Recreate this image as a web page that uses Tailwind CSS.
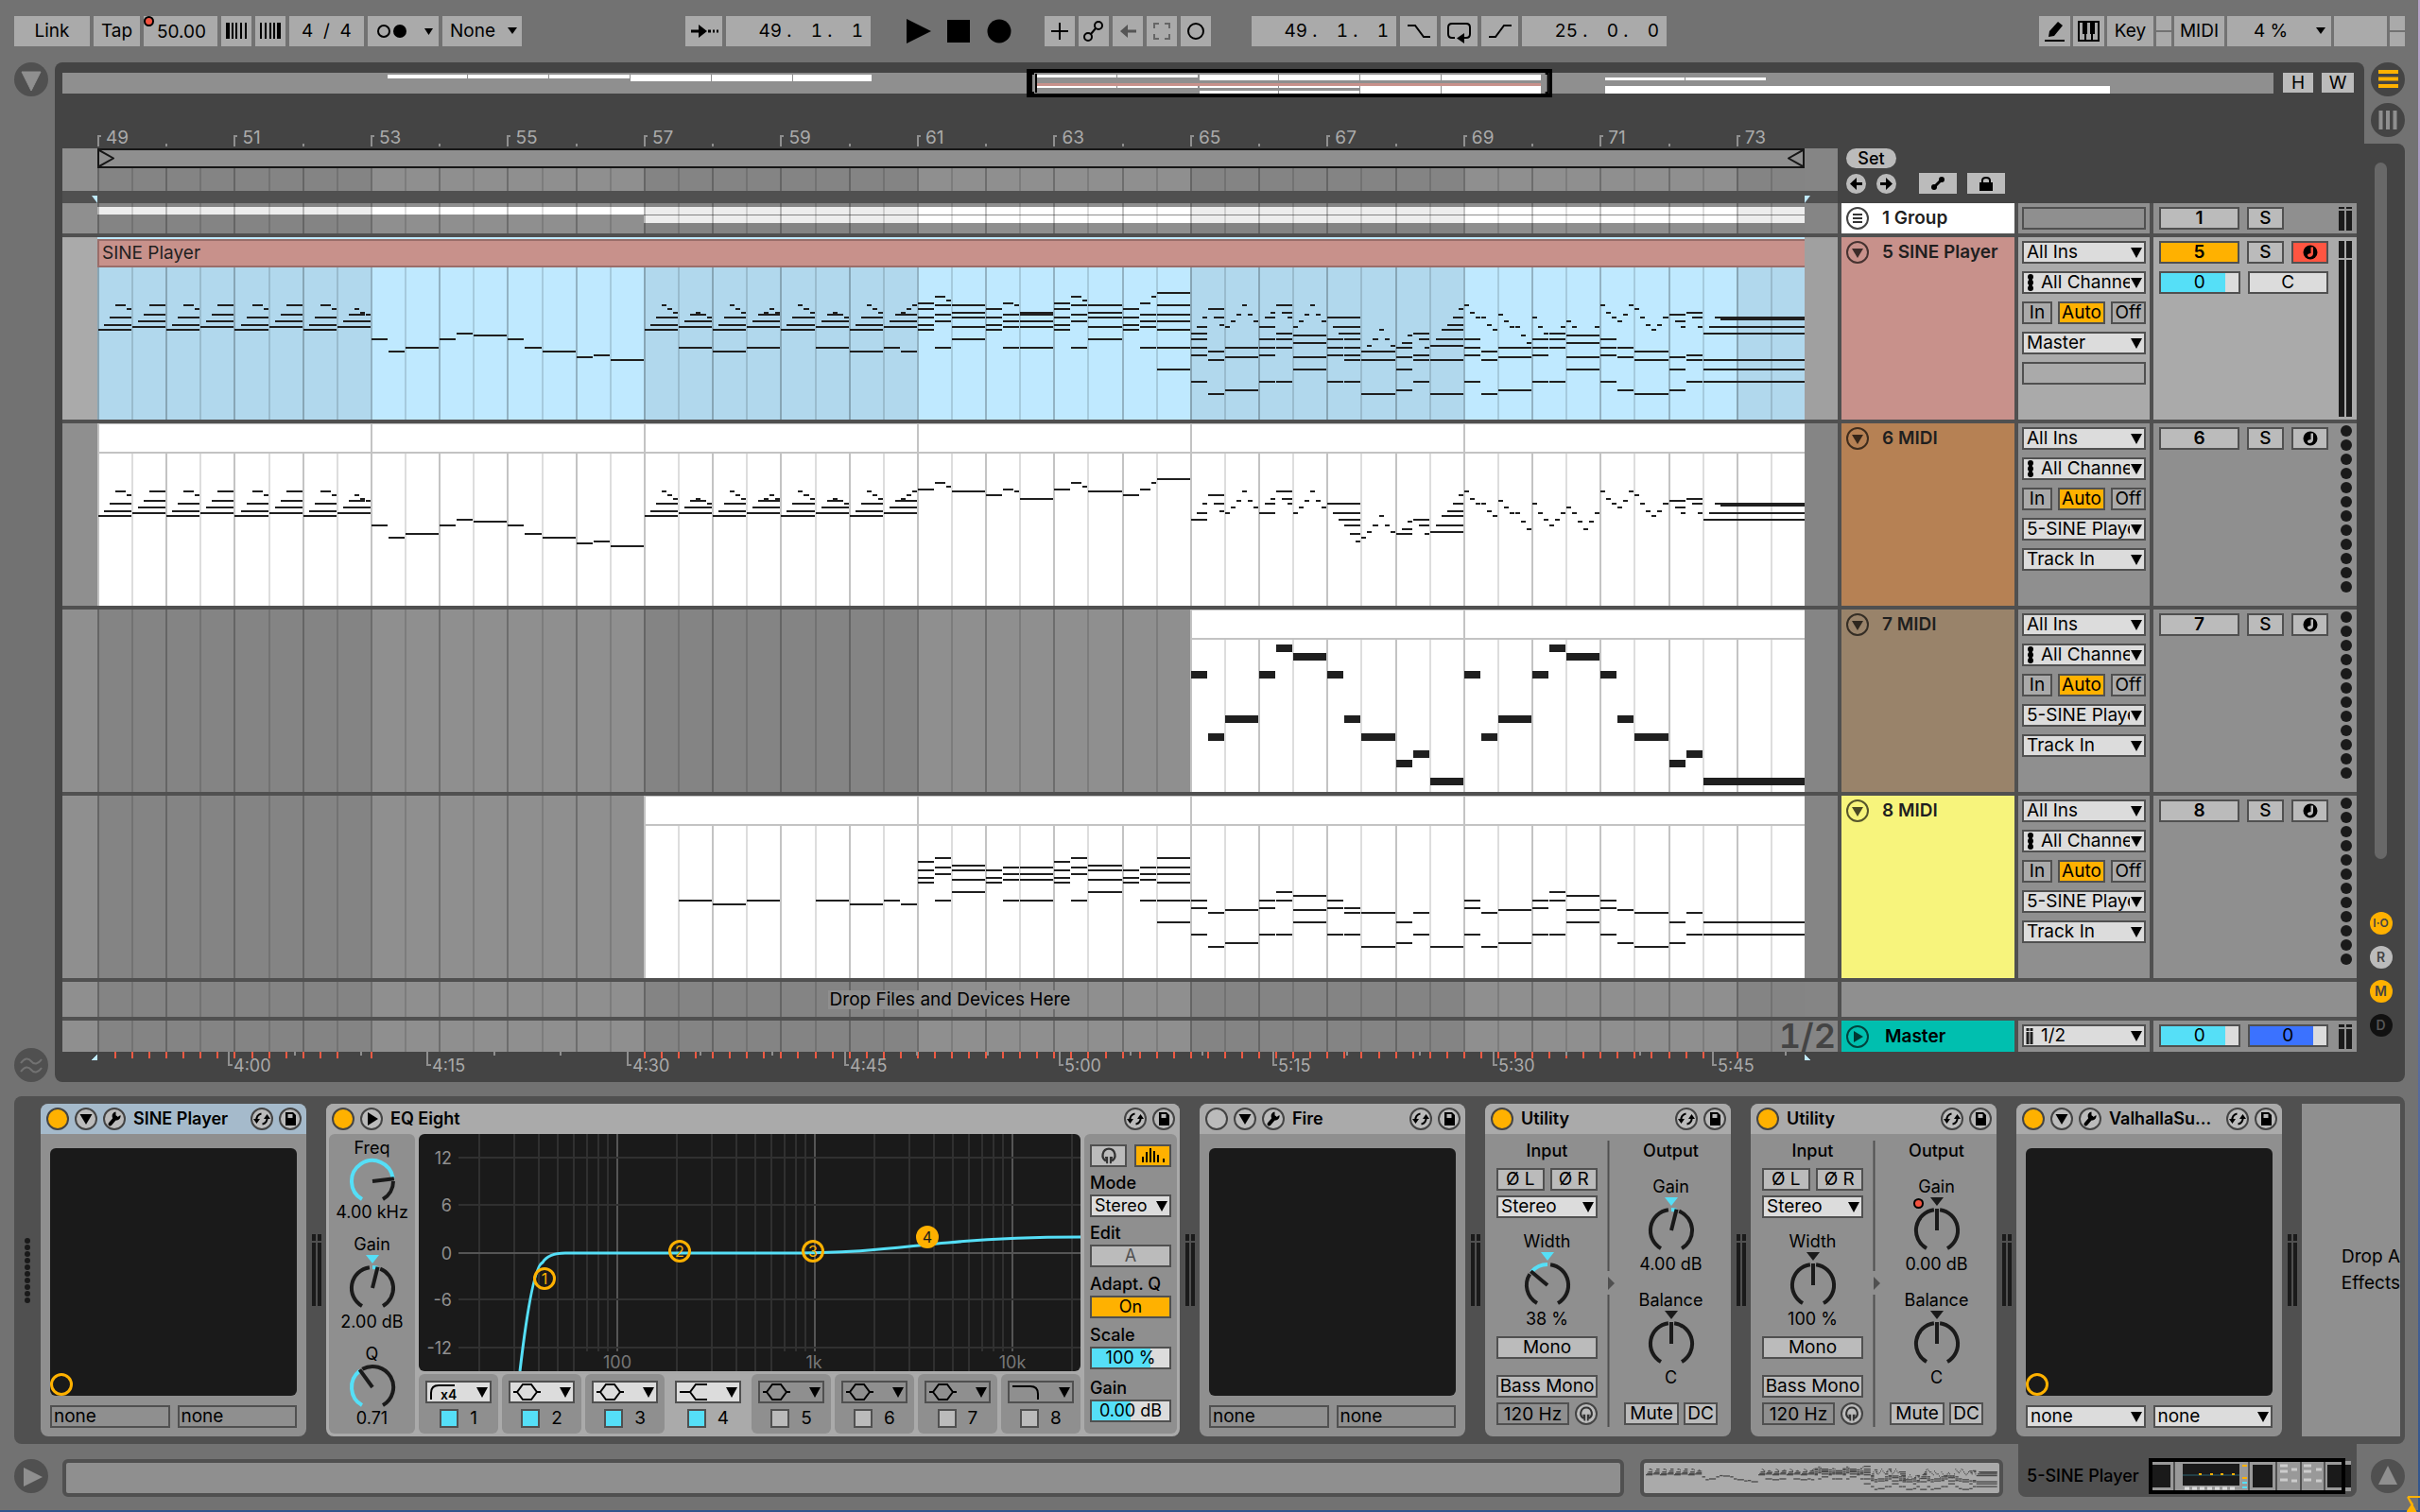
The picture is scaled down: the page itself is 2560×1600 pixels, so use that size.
<!DOCTYPE html>
<html lang="en">

<head>
  <meta charset="utf-8">
  <title>Arrangement</title>
  <script src="https://cdn.jsdelivr.net/npm/@tailwindcss/browser@4"></script>
</head>

<body class="relative min-h-screen overflow-x-hidden bg-linear-to-b from-[#b9a3c9] to-[#2f548c] pr-[2px] pb-[2px] font-[Inter,'Liberation_Sans',sans-serif] text-[19px] leading-[20px] text-black">
  <div class="bg-[#727272]">

    <!-- toolbar -->
    <header class="flex h-[66px] items-center pr-[14px] pl-[15px]">
      <div class="flex h-8 gap-1">
        <button class="w-[80px] bg-[#aaa]">Link</button>
        <button class="w-[49px] bg-[#aaa]">Tap</button>
        <label class="relative w-[78px] bg-[#aaa]">
          <input aria-label="Tempo" value="50.00" class="h-full w-full pl-[14px]">
          <span class="absolute top-0 left-0 size-[11px] rounded-full border-2 border-black bg-[#f4523f]"></span>
        </label>
        <button aria-label="Nudge down" class="w-8 bg-[#aaa]"><svg viewBox="0 0 32 32"><path d="M12 7v17M16 7v17M21 7v17M26 7v17" stroke="#000" stroke-width="2"/><path d="M7 7v17" stroke="#000" stroke-width="4"/></svg></button>
        <button aria-label="Nudge up" class="w-8 bg-[#aaa]"><svg viewBox="0 0 32 32"><path d="M6 7v17M11 7v17M16 7v17M20 7v17" stroke="#000" stroke-width="2"/><path d="M25 7v17" stroke="#000" stroke-width="4"/></svg></button>
        <input aria-label="Time signature" value="4  /  4" class="w-[79px] bg-[#aaa] text-center whitespace-pre">
        <button aria-label="Metronome" class="w-[75px] bg-[#aaa]"><svg viewBox="0 0 75 32"><circle cx="17" cy="16" r="6" fill="none" stroke="#000" stroke-width="2"/><circle cx="34" cy="16" r="7"/><path d="M60 13h9l-4.500 7z"/></svg></button>
        <button class="flex w-[84px] items-center justify-between bg-[#aaa] pr-[5px] pl-2">None<svg class="w-[10px]" viewBox="0 0 10 8"><path d="M0 0h10L5 7z"/></svg></button>
      </div>
      <div class="flex-[173]"></div>
      <div class="flex h-8 gap-1">
        <button aria-label="Follow" class="w-[39px] bg-[#aaa]"><svg viewBox="0 0 39 32"><path d="M6 16h10M24 16h3M29 16h2M33 16h2" stroke="#000" stroke-width="3"/><path d="M14 9l9 7-9 7z"/></svg></button>
        <input aria-label="Arrangement position" value="49 .    1 .    1" class="mr-[33px] w-[153px] bg-[#aaa] pr-2 text-right tabular-nums">
        <button aria-label="Play" class="w-[28px]"><svg viewBox="0 0 28 32"><path d="M1 3l26 13L1 29z"/></svg></button>
        <button aria-label="Stop" class="ml-2 w-[32px]"><svg viewBox="0 0 32 32"><path d="M4 4h24v24H4z"/></svg></button>
        <button aria-label="Record" class="ml-[7px] mr-[28px] w-[32px]"><svg viewBox="0 0 32 32"><circle cx="16" cy="16" r="12.500"/></svg></button>
        <button aria-label="Overdub" class="w-8 bg-[#aaa]"><svg viewBox="0 0 32 32"><path d="M16 7v18M7 16h18" stroke="#000" stroke-width="2"/></svg></button>
        <button aria-label="Automation arm" class="w-8 bg-[#aaa]"><svg viewBox="0 0 32 32" fill="none" stroke="#000" stroke-width="2"><circle cx="21" cy="10" r="4"/><circle cx="10" cy="22" r="4"/><path d="M18 13l-5 6"/></svg></button>
        <button aria-label="Re-enable automation" class="w-8 bg-[#aaa]"><svg viewBox="0 0 32 32"><path d="M12 16h13" stroke="#555" stroke-width="3"/><path d="M16 9v14l-8-7z" fill="#555"/></svg></button>
        <button aria-label="Capture MIDI" class="w-8 bg-[#aaa]"><svg viewBox="0 0 32 32" fill="none" stroke="#666" stroke-width="2"><path d="M8 13V8h5M19 8h5v5M24 19v5h-5M13 24H8v-5"/></svg></button>
        <button aria-label="Session record" class="w-8 bg-[#aaa]"><svg viewBox="0 0 32 32"><circle cx="16" cy="16" r="8" fill="none" stroke="#000" stroke-width="2"/></svg></button>
      </div>
      <div class="flex-[43]"></div>
      <div class="flex h-8 gap-1">
        <input aria-label="Loop start" value="49 .    1 .    1" class="w-[153px] bg-[#aaa] pr-2 text-right tabular-nums">
        <button aria-label="Punch in" class="w-[39px] bg-[#aaa]"><svg viewBox="0 0 39 32"><path d="M8 10h8l9 12h7" fill="none" stroke="#000" stroke-width="2"/></svg></button>
        <button aria-label="Loop" class="w-[39px] bg-[#aaa]"><svg viewBox="0 0 39 32"><path d="M15 23h-3q-4 0-4-4v-7q0-4 4-4h15q4 0 4 4v7q0 4-4 4h-4" fill="none" stroke="#000" stroke-width="2"/><path d="M25 18v11l-8-5.500z"/></svg></button>
        <button aria-label="Punch out" class="w-[39px] bg-[#aaa]"><svg viewBox="0 0 39 32"><path d="M8 22h7l9-12h8" fill="none" stroke="#000" stroke-width="2"/></svg></button>
        <input aria-label="Loop length" value="25 .    0 .    0" class="w-[153px] bg-[#aaa] pr-2 text-right tabular-nums">
      </div>
      <div class="flex-[394]"></div>
      <div class="flex h-8 gap-[3px]">
        <button aria-label="Draw mode" class="w-[33px] bg-[#aaa]"><svg viewBox="0 0 33 32"><path d="M6 26h21" stroke="#000" stroke-width="2"/><path d="M10 22l1-6 9-10 5 4-9 11z"/></svg></button>
        <button aria-label="Computer MIDI keyboard" class="w-[33px] bg-[#aaa]"><svg viewBox="0 0 33 32"><path d="M6 6h21v20H6zM13 18v8M20 18v8" fill="none" stroke="#000" stroke-width="2"/><path d="M10 6h5v13h-5zM18 6h5v13h-5z"/></svg></button>
        <button class="w-[49px] bg-[#aaa]">Key</button>
        <div class="flex w-4 flex-col gap-[2px]"><i class="flex-1 bg-[#aaa]"></i><i class="flex-1 bg-[#aaa]"></i></div>
        <button class="w-[53px] bg-[#aaa]">MIDI</button>
        <button class="flex w-[110px] items-center justify-between bg-[#aaa] pr-[6px] pl-[28px]">4 %<svg class="w-[10px]" viewBox="0 0 10 8"><path d="M0 0h10L5 7z"/></svg></button>
        <div class="w-[56px] bg-[#aaa]"></div>
        <div class="flex w-4 flex-col gap-[2px]"><i class="flex-1 bg-[#aaa]"></i><i class="flex-1 bg-[#aaa]"></i></div>
      </div>
    </header>

    <!-- arrangement -->
    <main class="flex">
      <div class="flex w-[58px] shrink-0 flex-col justify-between pl-[15px]">
        <button aria-label="Show browser" class="size-9"><svg viewBox="0 0 36 36"><circle cx="18" cy="18" r="18" fill="#505050"/><path d="M8 10h20L18 30z" fill="#8f8f8f" stroke="#8f8f8f" stroke-linejoin="round"/></svg></button>
        <button aria-label="Groove pool" class="size-9"><svg viewBox="0 0 36 36"><circle cx="18" cy="18" r="18" fill="#505050"/><path d="M7 16q6-8 11-2t11-2M7 25q6-8 11-2t11-2" fill="none" stroke="#727272" stroke-width="2"/></svg></button>
      </div>

      <div class="min-w-0 flex-1 rounded-l-lg rounded-tr-lg bg-[#444] pt-[11px] pr-2 pl-2">
        <div class="flex items-start">
          <div class="relative h-[22px] flex-1 bg-[#8f8f8f]">
            <svg id="overview" class="h-full w-full" viewBox="0 0 2339 22" preserveAspectRatio="none" shape-rendering="crispEdges"></svg>
            <svg class="absolute -top-[4px] left-[43.600%] h-[30px] w-[23.800%]" viewBox="0 0 556 30" preserveAspectRatio="none"><path d="M2 2h552v26H2z" fill="none" stroke="#000" stroke-width="4"/><path d="M8 5H5v20h3M548 5h3v20h-3M10 5v20" fill="none" stroke="#000" stroke-width="2"/></svg>
          </div>
          <button class="ml-[10px] h-[21px] w-8 bg-[#bbb]">H</button>
          <button class="mr-[3px] ml-[9px] h-[21px] w-[34px] bg-[#bbb]">W</button>
        </div>

        <!-- beat ruler -->
        <div class="flex h-[58px] items-end">
          <div id="beats" class="ml-[37px] flex flex-1 text-[#aaa]"></div>
          <div class="w-[584px]"></div>
        </div>

        <div class="flex gap-1">
          <div class="flex-1">
            <div class="flex h-[45px]">
              <div class="w-[37px] bg-[#8f8f8f]"></div>
              <div class="flex-1 bg-[#8f8f8f]">
                <div class="flex h-[21px] justify-between border-2 border-[#161616]">
                  <svg class="w-4" viewBox="0 0 16 17"><path d="M0 0l15 8.500L0 17" fill="none" stroke="#161616" stroke-width="2"/></svg>
                  <svg class="w-4" viewBox="0 0 16 17"><path d="M16 0L1 8.500 16 17" fill="none" stroke="#161616" stroke-width="2"/></svg>
                </div>
                <svg data-lane="scrub" class="h-[24px] w-full" viewBox="0 0 1806 24" preserveAspectRatio="none" shape-rendering="crispEdges"></svg>
              </div>
              <div class="w-[35px] bg-[#858585]"></div>
            </div>
            <div class="flex h-[13px] items-end justify-between bg-[#505050] pr-[29px] pl-[31px]">
              <svg class="w-[6px]" viewBox="0 0 6 8"><path d="M0 0h6v8z" fill="#bfe9ff"/></svg>
              <svg class="w-[6px]" viewBox="0 0 6 8"><path d="M0 0h6L0 8z" fill="#bfe9ff"/></svg>
            </div>
          </div>
          <div class="w-[545px] pl-[5px]">
            <button class="block h-[21px] w-[53px] rounded-full bg-[#bbb] text-[18px] font-medium">Set</button>
            <div class="mt-[5px] flex items-center">
              <button aria-label="Previous locator" class="size-[21px]"><svg viewBox="0 0 21 21"><circle cx="10.500" cy="10.500" r="10.500" fill="#bbb"/><path d="M8 10.500h9" stroke="#000" stroke-width="3"/><path d="M11 4v13l-7-6.500z"/></svg></button>
              <button aria-label="Next locator" class="ml-[11px] size-[21px]"><svg viewBox="0 0 21 21"><circle cx="10.500" cy="10.500" r="10.500" fill="#bbb"/><path d="M4 10.500h9" stroke="#000" stroke-width="3"/><path d="M10 4v13l7-6.500z"/></svg></button>
              <button aria-label="Automation mode" class="ml-6 h-[22px] w-10 bg-[#bbb]"><svg viewBox="0 0 40 22"><path d="M16 15l8-8" stroke="#000" stroke-width="3"/><circle cx="24" cy="7" r="3"/><circle cx="16" cy="15" r="3"/></svg></button>
              <button aria-label="Lock envelopes" class="ml-[11px] h-[22px] w-10 bg-[#bbb]"><svg viewBox="0 0 40 22"><path d="M13 10h14v9H13z"/><path d="M16 11V8q0-3 4-3t4 3v3" fill="none" stroke="#000" stroke-width="2"/></svg></button>
            </div>
          </div>
        </div>

        <div id="tracks" class="flex flex-col gap-1 bg-[#505050]"></div>

        <!-- time ruler -->
        <div class="flex h-8">
          <div id="times" class="relative ml-[37px] flex-1 text-[#aaa]"></div>
          <div class="w-[584px]"></div>
        </div>
      </div>

      <div class="flex w-[57px] shrink-0 flex-col">
        <div class="flex h-[86px] flex-col items-center gap-[7px] pr-[7px]">
          <button aria-label="Arrangement view" class="size-9"><svg viewBox="0 0 36 36"><circle cx="18" cy="18" r="18" fill="#444"/><path d="M8 10h21M8 17.500h21M8 25h21" stroke="#ffb100" stroke-width="4"/></svg></button>
          <button aria-label="Session view" class="size-9"><svg viewBox="0 0 36 36"><circle cx="18" cy="18" r="18" fill="#444"/><path d="M10.500 8v20M18 8v20M25.500 8v20" stroke="#8f8f8f" stroke-width="4"/></svg></button>
        </div>
        <div class="flex w-[43px] flex-1 flex-col items-center gap-3 rounded-r-lg bg-[#444] pt-5 pr-2 pb-12 text-[14px] font-semibold">
          <div class="mb-11 w-[13px] flex-1 rounded-full bg-[#686868]"></div>
          <button class="size-6 rounded-full bg-[#ffb100] text-[12px] text-[#444]">I·O</button>
          <button class="size-6 rounded-full bg-[#bbb] text-[#444]">R</button>
          <button class="size-6 rounded-full bg-[#ffb100] text-[#444]">M</button>
          <button class="size-6 rounded-full bg-[#111] text-[#555]">D</button>
        </div>
      </div>
    </main>

    <!-- device chain -->
    <section id="devices" class="mt-[15px] mr-[14px] ml-[15px] flex h-[368px] overflow-hidden rounded-lg bg-[#505050] py-2"></section>

    <footer class="flex h-[70px]">
      <div class="w-[66px] shrink-0 pt-4 pl-[15px]">
        <button aria-label="Show info view" class="size-9"><svg viewBox="0 0 36 36"><circle cx="18" cy="18" r="18" fill="#505050"/><path d="M10 9v20l20-10z" fill="#8f8f8f"/></svg></button>
      </div>
      <div class="mt-4 h-[40px] flex-1 rounded-md border-4 border-[#505050] bg-[#8f8f8f]"></div>
      <div class="mt-4 ml-[17px] h-[40px] w-[384px] shrink-0 rounded-md border-4 border-[#505050] bg-[#aaa] px-[2px]">
        <svg id="mini" class="h-full w-full" viewBox="0 0 370 32" preserveAspectRatio="none"></svg>
      </div>
      <div class="ml-4 flex h-[56px] w-[358px] shrink-0 items-center rounded-b-lg bg-[#505050] pt-3 pl-[9px] text-[18px] font-medium">
        <span class="w-[129px] whitespace-nowrap">5-SINE Player</span>
        <svg class="h-[38px] w-[214px]" viewBox="0 0 214 38">
          <path d="M0 3h214v32H0z" fill="#999"/>
          <path d="M4 7h19v24H4zM36 6h60v23H36zM110 7h21v24h-21zM189 7h25v24h-25z" fill="#1a1a1a"/>
          <path d="M27 3v32M106 3v32M135 3v32M161 3v32M186 3v32" stroke="#505050" stroke-width="2"/>
          <path d="M36 18h60" stroke="#2c6473"/>
          <path d="M53 17h3M65 17h3M76 17h3M88 17h3M99 8h5M99 21h5" stroke="#ffb100" stroke-width="2"/>
          <path d="M38 32h56" stroke="#ddd" stroke-width="3" stroke-dasharray="5 3"/><path d="M99 26h5M99 31h5" stroke="#55dff7" stroke-width="2"/>
          <path d="M139 8h8M139 14h8M139 23h8M151 12h6M151 24h6M164 8h8M164 14h8M164 23h8M177 12h6M177 24h6" stroke="#ccc" stroke-width="3"/>
          <path d="M2 2h204v34H2z" fill="none" stroke="#000" stroke-width="4"/>
        </svg>
      </div>
      <div class="w-[65px] shrink-0 pt-4 pl-[15px]">
        <button aria-label="Hide detail view" class="size-9"><svg viewBox="0 0 36 36"><circle cx="18" cy="18" r="18" fill="#505050"/><path d="M8 27h20L18 7z" fill="#8f8f8f"/></svg></button>
      </div>
    </footer>
  </div>
  <svg class="absolute right-0 bottom-0 w-[14px]" viewBox="0 0 14 17"><path d="M1 1h13M1 1l5 8-5 7h8z" fill="#ffb100" stroke="#ffb100" stroke-width="2"/></svg>

  <script>
    // ---- notes: [start, length, row], 12 units per bar, rows count down in semitones ----
    const W = 1806, U = W / 300, CELL = W / 50;
    const BLACK = '#1f1f1f';

    const melody = [[0, 3, 26], [3, 3, 33], [6, 6, 31], [12, 3, 26], [15, 3, 23], [18, 6, 24], [24, 3, 26], [27, 3, 31], [30, 6, 33], [36, 3, 36], [39, 3, 35], [42, 6, 38]];
    const at = (cell, notes) => notes.map(([s, l, r]) => [cell * 6 + s, l, r]);
    const steps = (rows) => rows.map((r, i) => [i, 1, r]);
    const chord = (s, l, rows) => rows.map(r => [s, l, r]);

    const A = [[0, 6, 21], [1, 5, 18], [2, 4, 14], [3, 2, 7], [5, 1, 9]];
    const B = [[0, 6, 19], [1, 5, 16], [2, 4, 12], [3, 3, 7]];
    const C = [[0, 6, 21], [1, 5, 18], [2, 4, 14], [3, 1, 7], [4, 1, 9], [5, 1, 11]];
    const D = [[0, 6, 19], [1, 5, 16], [2, 3, 12], [3, 1, 11], [5, 1, 14]];
    const E = [[0, 6, 19], [1, 5, 16], [2, 4, 12], [3, 1, 11], [4, 1, 9], [5, 1, 11]];
    const top1 = [[0, 3, 6], [3, 2, 2], [5, 1, 4]];

    const t6 = [
      ...at(0, A), ...at(1, B), ...at(2, A), ...at(3, B), ...at(4, A), ...at(5, B), ...at(6, A),
      ...at(7, [[0, 6, 19], [1, 5, 16], [2, 3, 12], [3, 1, 9], [4, 1, 11], [5, 1, 12]]),
      ...at(8, melody),
      ...at(16, C), ...at(17, D), ...at(18, C), ...at(19, E), ...at(20, C), ...at(21, D), ...at(22, C),
      ...at(23, [[0, 6, 19], [1, 5, 16], [2, 4, 12], [3, 1, 11], [4, 1, 9], [5, 1, 7]]),
      ...at(24, top1), ...at(25, [[0, 6, 7]]), ...at(26, [[0, 3, 9], [3, 2, 6], [5, 1, 7]]), ...at(27, [[0, 6, 11]]),
      ...at(28, top1), ...at(29, [[0, 6, 7]]), ...at(30, [[0, 3, 9], [3, 2, 6], [5, 1, 2]]), ...at(31, [[0, 6, 0]]),
      ...at(32, [[0, 3, 23], [1, 2, 19], [2, 1, 14], [3, 3, 9], [4, 2, 14], [5, 1, 18]]),
      ...at(33, steps([19, 16, 12, 7, 12, 16])),
      ...at(34, [[0, 3, 19], [1, 2, 14], [2, 1, 11], [3, 3, 7], [4, 2, 11], [5, 1, 14]]),
      ...at(35, steps([19, 16, 12, 7, 12, 16])),
      ...at(36, [[0, 6, 14], [1, 5, 19], [2, 4, 23], [3, 3, 26], [4, 2, 31], [5, 1, 35]]),
      ...at(37, steps([33, 30, 26, 21, 26, 30])),
      ...at(38, [[0, 3, 31], [1, 2, 28], [2, 1, 24], [3, 3, 23], [4, 2, 26], [5, 1, 31]]),
      ...at(39, [[0, 6, 30], [1, 5, 26], [2, 4, 21], [3, 3, 18], [4, 2, 14], [5, 1, 9]]),
      ...at(40, steps([7, 11, 14, 14, 18, 21])), ...at(41, steps([12, 16, 19, 19, 24, 28])),
      ...at(42, steps([14, 19, 23, 26, 23, 19])), ...at(43, steps([16, 19, 24, 28, 24, 19])),
      ...at(44, steps([7, 11, 14, 16, 12, 7])), ...at(45, steps([9, 14, 18, 21, 18, 14])),
      ...at(46, [[0, 3, 12], [1, 2, 16], [2, 1, 19], [3, 3, 11], [4, 2, 14], [5, 1, 19]]),
      ...at(47, [[0, 18, 23], [1, 17, 19], [2, 16, 14], [3, 15, 15]]),
    ];

    const t7 = [...at(32, melody), ...at(40, melody.slice(0, 11)), ...at(47, [[0, 18, 38]])];

    const k1 = [...chord(0, 3, [9, 14, 18, 21]), ...chord(3, 3, [7, 12, 16, 31]), ...chord(6, 6, [11, 14, 19, 26]), ...chord(12, 3, [14, 18, 21]), ...chord(15, 3, [12, 16, 19, 31])];
    const k2 = [...chord(0, 3, [31, 35, 50]), ...chord(3, 3, [38, 57]), ...chord(6, 6, [36, 55]), ...chord(12, 3, [31, 35, 50]), ...chord(15, 3, [26, 31, 50]), ...chord(18, 6, [28, 36, 43]), ...chord(24, 3, [31, 35, 50])];
    const t8 = [
      ...at(17, [[0, 6, 31], [6, 6, 33], [12, 6, 31], [24, 6, 31], [30, 6, 33], [36, 3, 31], [39, 3, 33]]),
      ...at(24, k1), ...at(27, chord(0, 6, [12, 16, 19, 31])), ...at(28, k1), ...at(31, chord(0, 6, [7, 12, 16, 21, 31, 43])),
      ...at(32, k2), ...at(36, chord(3, 3, [35, 38, 50])), ...at(37, chord(0, 6, [38, 57])), ...at(38, [...chord(0, 3, [43, 55]), ...chord(3, 3, [38, 50]), [6, 6, 57]]),
      ...at(40, k2), ...at(44, chord(3, 3, [36, 55])), ...at(45, chord(0, 6, [38, 57])), ...at(46, [...chord(0, 3, [43, 55]), ...chord(3, 3, [38, 50])]),
      ...at(47, chord(0, 18, [43, 50])),
    ];
    const t5 = [...t6, ...t7, ...t8];

    const rect = (x, y, w, h, fill) => `<rect x="${x}" y="${y}" width="${w}" height="${h}" fill="${fill}"/>`;

    function drawNotes(notes, top, pitch, h) {
      return notes.map(([s, l, r]) => {
        const x = Math.round(s * U), w = Math.round((s + l) * U) - x;
        return rect(x + 1, Math.round(top + r * pitch), w - 1, h, BLACK);
      }).join('');
    }
    function bands(h) {
      return [[0, 8], [16, 8], [32, 8], [48, 2]].map(([c, n]) => rect(Math.round(c * CELL), 0, Math.round(n * CELL), h, '#00000012')).join('');
    }
    function lines(y, h, from = 0) {
      let s = '';
      for (let c = from; c < 50; c++) s += rect(Math.round(c * CELL), y, 2, h, c % 2 ? '#00000022' : '#0000003c');
      return s;
    }
    function clip(fromCell, h) {
      const x = Math.round(fromCell * CELL);
      let s = rect(x, 0, W - x, h, '#fff') + lines(31, h, fromCell) + rect(x, 0, W - x, 1, '#c3c3c3') + rect(x, 30, W - x, 2, '#c3c3c3');
      for (let c = fromCell; c < 48; c += 8) s += rect(Math.round(c * CELL), 0, 2, 31, '#c3c3c3');
      return s;
    }
    const lanes = {
      scrub: bands(24) + lines(0, 24),
      group: rect(0, 4, W, 8, '#fff') + rect(578, 13, 1228, 8, '#fff') + bands(32) + lines(0, 32),
      sine: rect(0, 0, W, 193, '#bfe9ff') + bands(193) + lines(32, 161) + rect(0, 0, W, 2, '#bfe9ff') + rect(0, 2, W, 30, '#9a6d69') + rect(2, 4, W - 2, 26, '#c8918b') + drawNotes(t5, 58, 1.877, 2),
      midi6: clip(0, 193) + drawNotes(t6, 58, 1.877, 2),
      midi7: bands(193) + lines(0, 193) + clip(32, 193) + drawNotes(t7.map(([s, l, r]) => [s, l, r - 23]), 37, 9.37, 8),
      midi8: bands(193) + lines(0, 193) + clip(16, 193) + drawNotes(t8, 52, 1.877, 2),
      drop: bands(37) + lines(0, 37),
      master: bands(33) + lines(0, 33),
    };

    // ---- small controls ----
    const tri = '<svg class="pointer-events-none absolute top-[5px] right-[2px] w-3" viewBox="0 0 12 11"><path d="M0 0h12L6 11z"/></svg>';
    const chanIcon = '<svg class="pointer-events-none absolute top-[1px] left-[3px] w-2" viewBox="0 0 8 18"><path d="M4 3v12" stroke="#1f1f1f" stroke-width="4"/><circle cx="4" cy="3" r="3"/><circle cx="4" cy="9" r="3"/><circle cx="4" cy="15" r="3"/></svg>';
    const meterIcon = '<svg class="pointer-events-none absolute top-[2px] left-[2px] w-2" viewBox="0 0 8 17"><path d="M2 0v3M6 0v3M2 4v13M6 4v13" stroke="#1f1f1f" stroke-width="3"/></svg>';

    const select = (text, label, icon = '') => `<div class="relative h-6 border-2 border-[#505050] bg-[#dcdcdc]">${icon}
      <select aria-label="${label}" class="block h-5 w-full appearance-none overflow-hidden pr-[15px] ${icon ? 'pl-[18px]' : 'pl-[3px]'}"><option>${text}</option></select>${tri}</div>`;
    const slider = (text, label, pct, fill = 'bg-[#55dff7]') => `<label class="relative block h-6 border-2 border-[#505050] bg-[#dcdcdc] text-center">
      <span class="absolute inset-y-0 left-0 ${fill}" style="width:${pct}%"></span><span class="relative">${text}</span>
      <input type="range" aria-label="${label}" value="${pct}" class="absolute inset-0 h-full w-full opacity-0"></label>`;
    const btn = (text, cls = 'bg-[#bbb]', label = '') => `<button ${label ? `aria-label="${label}"` : ''} class="h-6 border-2 border-[#505050] whitespace-nowrap ${cls}">${text}</button>`;

    const foldIcon = '<svg viewBox="0 0 24 24"><circle cx="12" cy="12" r="11" fill="none" stroke="#000" stroke-opacity=".65" stroke-width="2"/><path d="M6 8h12l-6 10z" fill-opacity=".7"/></svg>';
    const groupIcon = '<svg viewBox="0 0 24 24"><circle cx="12" cy="12" r="11" fill="none" stroke="#444" stroke-width="2"/><path d="M7 8h10M7 12h10M7 16h10" stroke="#333" stroke-width="2"/></svg>';
    const playIcon = '<svg viewBox="0 0 24 24"><circle cx="12" cy="12" r="11" fill="none" stroke="#000" stroke-opacity=".65" stroke-width="2"/><path d="M8 6v12l10-6z" fill-opacity=".7"/></svg>';
    const armIcon = (bg) => `<svg class="mx-auto w-4" viewBox="0 0 16 16"><circle cx="8" cy="8" r="7.500"/><path d="M8.500 2.500h2.500V9q0 4-4.500 4-2-1-1.500-2.500Q6 9 8.500 9z" fill="${bg}"/></svg>`;

    const vmeter = (h) => `<div class="flex w-[14px] shrink-0 gap-[2px]">${`<div class="flex flex-1 flex-col gap-[2px]"><i class="${h} bg-[#1a1a1a]"></i><i class="flex-1 bg-[#1a1a1a]"></i></div>`.repeat(2)}</div>`;
    const dotMeter = `<div class="-mt-[2px] flex w-3 shrink-0 flex-col gap-[3px]">${'<i class="size-3 rounded-full bg-[#1a1a1a]"></i>'.repeat(12)}</div>`;

    function track({ lane, h, name, color, icon, io, mixer, meter, clipName = '', bg = 'bg-[#8f8f8f]', side = 'bg-[#858585]' }) {
      return `<div class="flex gap-1 ${h}">
        <div class="flex flex-1">
          <div class="w-[37px] ${bg}"></div>
          <div class="relative min-w-0 flex-1 bg-[#8f8f8f]"><svg data-lane="${lane}" class="h-full w-full" viewBox="0 0 1806 ${lane === 'group' ? 32 : 193}" preserveAspectRatio="none" shape-rendering="crispEdges"></svg>
            ${clipName ? `<span class="absolute top-[7px] left-[5px] text-[#1f1f1f]">${clipName}</span>` : ''}</div>
          <div class="w-[35px] ${side}"></div>
        </div>
        <div class="flex w-[183px] items-start gap-[14px] pt-1 pl-[5px] font-semibold text-[#1f1f1f] ${color}"><button aria-label="Fold ${name}" class="size-6">${icon}</button><span class="leading-6 whitespace-nowrap">${name}</span></div>
        <div class="flex w-[139px] flex-col gap-2 px-1 pt-1 ${bg}">${io}</div>
        <div class="flex w-[215px] justify-between ${bg} pt-1 pr-[5px] pb-[3px] pl-[6px]"><div class="flex w-[179px] flex-col gap-2">${mixer}</div>${meter}</div>
      </div>`;
    }
    const monitor = `<div class="flex justify-between">${btn('In', 'bg-[#aaa] w-8') + btn('Auto', 'bg-[#ffb100] w-[50px]') + btn('Off', 'bg-[#aaa] w-[37px]')}</div>`;
    const buttons = (n, on) => `<div class="flex gap-2">${btn(n, on ? 'bg-[#ffb100] w-[85px] font-semibold' : 'bg-[#bbb] w-[85px] font-semibold') + btn('S', 'bg-[#bbb] w-[39px] font-medium') + (n === '1' ? '' : btn(armIcon(on ? '#ff5541' : '#bbb'), on ? 'bg-[#ff5541] w-[39px]' : 'bg-[#bbb] w-[39px]', 'Arm'))}</div>`;
    const empty = '<div class="h-6 border-2 border-[#505050]"></div>';
    const ins = select('All Ins', 'MIDI from') + select('All Channels', 'Input channel', chanIcon) + monitor;
    const midiIo = ins + select('5-SINE Player', 'MIDI to') + select('Track In', 'Output channel');

    document.getElementById('tracks').innerHTML =
      track({ lane: 'group', h: 'h-8', name: '1 Group', color: 'bg-white', icon: groupIcon, io: empty, mixer: buttons('1'), meter: vmeter('h-[2px]') }) +
      track({ lane: 'sine', h: 'h-[193px]', name: '5 SINE Player', clipName: 'SINE Player', color: 'bg-[#c8918b]', icon: foldIcon, io: ins + select('Master', 'Audio to') + empty, mixer: buttons('5', true) + `<div class="grid grid-cols-2 gap-2">${slider('0', 'Volume', 84) + slider('C', 'Pan', 0)}</div>`, meter: vmeter('h-[18px]'), bg: 'bg-[#aaa]', side: 'bg-[#a0a0a0]' }) +
      track({ lane: 'midi6', h: 'h-[193px]', name: '6 MIDI', color: 'bg-[#b68154]', icon: foldIcon, io: midiIo, mixer: buttons('6'), meter: dotMeter }) +
      track({ lane: 'midi7', h: 'h-[193px]', name: '7 MIDI', color: 'bg-[#99836a]', icon: foldIcon, io: midiIo, mixer: buttons('7'), meter: dotMeter }) +
      track({ lane: 'midi8', h: 'h-[193px]', name: '8 MIDI', color: 'bg-[#f7f47c]', icon: foldIcon, io: midiIo, mixer: buttons('8'), meter: dotMeter }) +
      `<div class="flex h-[37px] gap-1">
        <div class="relative flex flex-1 items-center justify-center">
          <div class="absolute inset-0 flex bg-[#8f8f8f]"><div class="w-[37px]"></div><svg data-lane="drop" class="h-full min-w-0 flex-1" viewBox="0 0 1806 37" preserveAspectRatio="none" shape-rendering="crispEdges"></svg><div class="w-[35px] bg-[#858585]"></div></div>
          <span class="relative bg-[#8f8f8f] px-[2px]">Drop Files and Devices Here</span>
        </div>
        <div class="w-[545px] bg-[#8f8f8f]"></div>
      </div>
      <div class="flex h-[33px] gap-1">
        <div class="relative flex flex-1 bg-[#8f8f8f]"><div class="w-[37px]"></div><svg data-lane="master" class="h-full min-w-0 flex-1" viewBox="0 0 1806 33" preserveAspectRatio="none" shape-rendering="crispEdges"></svg><div class="w-[35px] bg-[#858585]"></div>
          <span class="absolute right-[2px] text-[36px] leading-8 font-semibold text-[#444] tabular-nums">1/2</span></div>
        <div class="flex w-[183px] items-center gap-[17px] bg-[#00bfaf] pl-[5px] font-semibold"><button aria-label="Master" class="size-6">${playIcon}</button>Master</div>
        <div class="w-[139px] bg-[#8f8f8f] px-1 pt-1">${select('1/2', 'Master out', meterIcon)}</div>
        <div class="flex w-[215px] justify-between bg-[#8f8f8f] pt-1 pr-[5px] pb-[3px] pl-[6px]"><div class="grid w-[179px] grid-cols-2 gap-2">${slider('0', 'Master volume', 83) + slider('0', 'Preview volume', 83, 'bg-[#3b72ff]')}</div>${vmeter('h-[3px]')}</div>
      </div>`;

    document.querySelectorAll('[data-lane]').forEach(s => s.innerHTML = lanes[s.dataset.lane]);

    // ---- rulers ----
    let beats = '';
    for (let b = 49; b <= 73; b += 2) {
      beats += `<div class="relative h-5 min-w-0 ${b < 73 ? 'flex-[2]' : 'flex-1'}"><i class="absolute top-[6px] left-0 h-3 w-1 border-t-2 border-l-2 border-[#8f8f8f]"></i><span class="absolute -top-[1px] left-[9px]">${b}</span>${b < 73 ? '<i class="absolute bottom-[2px] left-1/2 h-[3px] w-[2px] bg-[#8f8f8f]"></i>' : ''}</div>`;
    }
    document.getElementById('beats').innerHTML = beats;

    const marks = [['4:00', 138], ['4:15', 348], ['4:30', 560], ['4:45', 790], ['5:00', 1017], ['5:15', 1243], ['5:30', 1476], ['5:45', 1708]];
    let ticks = '';
    for (let k = 1; k <= 96; k++) {
      if (k === 15 || (k > 16 && k < 32) || k === 95) continue;
      ticks += rect(Math.round(k * W / 100), 0, 2, 7, '#ee5a43');
    }
    marks.forEach(([, x], i) => {
      const step = ((i < 7 ? marks[i + 1][1] : x + 232) - x) / 3;
      ticks += rect(x, 0, 2, 14, '#8f8f8f') + rect(x, 13, 5, 2, '#8f8f8f') + rect(Math.round(x + step), 0, 2, 4, '#8f8f8f');
      if (i < 7) ticks += rect(Math.round(x + 2 * step), 0, 2, 4, '#8f8f8f');
    });
    document.getElementById('times').innerHTML = `<svg class="absolute inset-0 h-full w-full overflow-visible" viewBox="0 0 1806 32" preserveAspectRatio="none" shape-rendering="crispEdges">${ticks}<path d="M0 2v7h-6zM1806 2v7h6z" fill="#bfe9ff"/></svg>` +
      marks.map(([t, x]) => `<span class="absolute top-[5px] text-[18px]" style="left:${(x + 6) / 18.06}%">${t}</span>`).join('');

    // ---- song overview ----
    const ov = [[344, 2, 84, 4], [429, 2, 85, 4], [515, 2, 85, 4], [601, 2, 85, 7], [687, 2, 85, 7], [773, 2, 83, 7],
    [1030, 2, 85, 3], [1116, 2, 85, 3], [1203, 2, 83, 6], [1287, 2, 85, 6], [1373, 2, 85, 6], [1459, 2, 105, 6],
    [1030, 14, 85, 2], [1116, 14, 85, 2], [1203, 14, 83, 2], [1287, 14, 85, 2], [1203, 19, 83, 3], [1287, 19, 85, 3], [1373, 14, 85, 8], [1459, 14, 105, 8],
    [1632, 5, 84, 3], [1717, 5, 85, 3], [1632, 14, 534, 8]];
    document.getElementById('overview').innerHTML = ov.map(([x, y, w, h]) => rect(x, y, w, h, '#fff')).join('') + rect(1030, 11, 534, 3, '#c8918b');

    document.getElementById('mini').innerHTML = t5.map(([s, l, r]) => rect(s * 370 / 300, 3 + r * 0.43, l * 370 / 300 - 0.3, 1.3, '#4a4a4a')).join('');

    // ---- devices ----
    function arc(a, b, color) {
      const p = (d) => `${(22 * Math.sin(d * Math.PI / 180)).toFixed(1)} ${(-22 * Math.cos(d * Math.PI / 180)).toFixed(1)}`;
      return `<path d="M${p(a)}A22 22 0 ${b - a > 180 ? 1 : 0} 1 ${p(b)}" fill="none" stroke="${color}" stroke-width="4"/>`;
    }
    function knob(label, value, angle, bipolar) {
      const blue = '#55dff7', dark = '#1a1a1a';
      let s = '';
      if (bipolar) {
        const lo = Math.min(0, angle), hi = Math.max(0, angle);
        s = arc(-150, lo - 8, dark) + arc(hi + 8, 150, dark) + (angle ? arc(lo, hi, blue) : '') + `<path d="M-7-35H7L0-26z" fill="${angle ? blue : dark}"/>`;
      } else {
        s = arc(-150, angle - 2, blue) + arc(angle + 7, 150, dark);
      }
      s += `<path d="M0 0V-23" stroke="${dark}" stroke-width="4" transform="rotate(${angle})"/>`;
      return `<label class="relative flex flex-col items-center text-[18px]"><span>${label}</span>
        <svg class="w-14" viewBox="${bipolar ? '-28 -36 56 60' : '-28 -25 56 48'}">${s}</svg><span class="whitespace-nowrap ${bipolar ? 'mt-[2px]' : ''}">${value}</span>
        <input type="range" aria-label="${label}" class="absolute inset-0 h-full w-full opacity-0"></label>`;
    }

    const ring = (inner, label, fill = '#bbb') => `<button aria-label="${label}" class="size-6 shrink-0"><svg viewBox="0 0 24 24"><circle cx="12" cy="12" r="11" fill="${fill}" stroke="#444" stroke-width="2"/>${inner}</svg></button>`;
    const fold = ring('<path d="M5.500 7h13L12 18z"/>', 'Fold');
    const unfold = ring('<path d="M8 5v14l11-7z"/>', 'Unfold');
    const wrench = ring('<path d="M7.500 17.500l6-7" stroke="#000" stroke-width="4" stroke-linecap="round"/><path d="M18.500 8a4.500 4.500 0 1 1-5-3.500v4l2 1.500z"/>', 'Plug-in window');
    const swap = ring('<path d="M6.500 13.500a6 6 0 0 1 5-7M17.500 10.500a6 6 0 0 1-5 7" fill="none" stroke="#000" stroke-width="2"/><path d="M3 12h7l-3.500 5zM14 12h7l-3.500-5z"/>', 'Hot-swap');
    const save = ring('<path d="M7 5h8l3 3v11H7z"/><path d="M9.500 7h5v4h-5z" fill="#bbb"/>', 'Save');
    const phones = '<path d="M7.500 17q-4.500-3-3.500-8 1.500-6 7-6t7 6q1 5-3.500 8" fill="none" stroke="#333" stroke-width="2.500"/><path d="M6.500 12h3.500v8H8zM15.500 12H12v8h2z" fill="#333"/>';

    const meter = `<div class="flex w-[21px] shrink-0 items-center justify-center gap-[2px]">${'<div class="flex h-[76px] flex-col gap-[2px]"><i class="h-[7px] w-1 bg-[#1a1a1a]"></i><i class="w-1 flex-1 bg-[#1a1a1a]"></i></div>'.repeat(2)}</div>`;

    function device(title, width, heads, body, opts = {}) {
      const on = opts.off ? '#bbb' : '#ffb100';
      return `<article class="flex ${width} shrink-0 flex-col overflow-hidden rounded-lg ${opts.bg || 'bg-[#8f8f8f]'}">
        <div class="flex h-8 shrink-0 items-center gap-[6px] ${opts.head || 'bg-[#aaa]'} pr-[5px] pl-[6px]">${ring('', 'Device on', on)}${heads}
          <h2 class="ml-[2px] flex-1 text-[18px] font-semibold whitespace-nowrap">${title}</h2>${swap}${save}</div>${body}</article>`;
    }
    function plugin(title, sel, opts) {
      const box = sel ? select('none', 'Parameter') : '<div class="h-6 border-2 border-[#505050] pl-[2px]">none</div>';
      return device(title, 'w-[281px]', fold + wrench, `<div class="px-[10px] pt-[15px]">
        <div class="relative h-[262px] rounded-md bg-[#1a1a1a]">${opts.off ? '' : '<span class="absolute bottom-0 left-0 size-6 rounded-full border-[3px] border-[#ffb100]"></span>'}</div>
        <div class="mt-[10px] grid grid-cols-2 gap-2">${box + box}</div></div>`, opts);
    }
    function utility(gain, width, balance, mod) {
      return device('Utility', 'w-[260px]', '', `<div class="flex flex-1">
        <div class="flex w-[131px] flex-col pt-2 pr-3 pl-3">
          <h3 class="text-center text-[18px] font-medium">Input</h3>
          <div class="mt-2 grid grid-cols-2 gap-[6px]">${btn('Ø L') + btn('Ø R')}</div>
          <div class="mt-[5px]">${select('Stereo', 'Channel mode')}</div>
          <div class="mt-[15px]">${width}</div>
          <div class="mt-2 grid">${btn('Mono')}</div>
          <div class="mt-[17px] grid">${btn('Bass Mono')}</div>
          <div class="mt-[5px] flex items-center justify-between"><input aria-label="Bass mono frequency" value="120 Hz" class="h-6 w-[77px] border-2 border-[#505050] text-center">
            <button aria-label="Audition" class="size-6"><svg viewBox="0 0 24 24"><circle cx="12" cy="12" r="11" fill="#bbb" stroke="#444" stroke-width="2"/><g transform="translate(3 3) scale(.82)">${phones}</g></svg></button></div>
        </div>
        <svg class="mt-[7px] -ml-[2px] h-[303px] w-2" viewBox="0 0 8 303"><path d="M1.500 0v138M1.500 163v140" stroke="#505050" stroke-width="2"/><path d="M1 144v14l7-7z" fill="#505050"/></svg>
        <div class="flex flex-1 flex-col pt-2 pr-[14px] pl-[10px]">
          <h3 class="text-center text-[18px] font-medium">Output</h3>
          <div class="relative mt-[18px]">${gain}${mod ? '<i class="absolute top-[22px] left-[25px] size-[11px] rounded-full border-2 border-black bg-[#f4523f]"></i>' : ''}</div>
          <div class="mt-[18px]">${balance}</div>
          <div class="mt-4 flex justify-between">${btn('Mute', 'bg-[#bbb] w-[58px]') + btn('DC', 'bg-[#bbb] w-[36px]')}</div>
        </div></div>`);
    }

    // EQ display
    const fx = (f) => 210 - 209 * Math.log10(100 / f);
    let grid = '';
    for (const d of [10, 100, 1000, 10000]) for (let i = 1; i < 10; i++) {
      const f = d * i, x = Math.round(fx(f));
      if (f < 20 || x > 700) continue;
      grid += `<path d="M${x} 0V${i >= 7 || i === 1 ? 230 : 251}" stroke="${i === 1 ? '#555' : '#303030'}" stroke-width="2"/>`;
    }
    [['12', 25], ['6', 75], ['0', 126], ['-6', 175], ['-12', 226]].forEach(([t, y]) => {
      grid += `<path d="M42 ${y}H702" stroke="${t === '0' ? '#555' : '#303030'}" stroke-width="2"/><text x="35" y="${y + 7}" text-anchor="end" fill="#8f8f8f">${t}</text>`;
    });
    [['100', 210], ['1k', 418], ['10k', 628]].forEach(([t, x]) => grid += `<text x="${x}" y="248" text-anchor="middle" fill="#777">${t}</text>`);
    const node = (n, x, y) => `<circle cx="${x}" cy="${y}" r="10.500" fill="${n === 4 ? '#ffb100' : 'none'}" stroke="#ffb100" stroke-width="3"/><text x="${x}" y="${y + 6}" text-anchor="middle" font-size="16" fill="${n === 4 ? '#1a1a1a' : '#ffb100'}">${n}</text>`;

    const shapes = {
      cut: '<path d="M4 18v-7q0-8 8-8h17" fill="none" stroke="#000" stroke-width="2"/><text x="14" y="18" font-size="14" font-weight="600">x4</text>',
      bell: '<path d="M3 10h4l6-8h9l6 8h4M7 10l6 8h9l6-8" fill="none" stroke="#000" stroke-width="2"/>',
      shelf: '<path d="M3 10h11l6-8h12M14 10l6 8h12" fill="none" stroke="#000" stroke-width="2"/>',
      high: '<path d="M3 4h19q8 0 8 8v6" fill="none" stroke="#000" stroke-width="2"/>',
    };
    const band = (shape, i) => {
      const n = i + 1, on = n < 5;
      return `<div class="flex-1 rounded-md pt-[7px] ${n === 4 ? '' : 'bg-[#8f8f8f]'}">
        <div class="relative mx-auto h-6 w-[70px] border-2 border-[#505050] ${on ? 'bg-[#dcdcdc]' : 'bg-[#8f8f8f]'}"><svg class="w-[42px]" viewBox="0 0 42 20">${shapes[shape]}</svg>${tri}
          <select aria-label="Filter type ${n}" class="absolute inset-0 w-full opacity-0"><option>${shape}</option></select></div>
        <label class="mt-[6px] flex items-center justify-center gap-3"><input type="checkbox" ${on ? 'checked' : ''} class="size-[20px] appearance-none border-2 border-[#505050] bg-[#bbb] checked:bg-[#55dff7]">${n}</label></div>`;
    };

    const eq = device('EQ Eight', 'w-[903px]', unfold, `<div class="flex flex-1 gap-1 px-[3px] pb-[3px]">
      <div class="flex w-[91px] flex-col justify-between rounded-md bg-[#8f8f8f] pt-[5px] pb-[6px]">
        ${knob('Freq', '4.00 kHz', 83, false)}${knob('Gain', '2.00 dB', 14, true)}${knob('Q', '0.71', -36, false)}</div>
      <div class="flex w-[700px] flex-col gap-[3px]">
        <svg class="h-[251px] w-full rounded-md bg-[#1a1a1a]" viewBox="0 0 700 251" font-size="18">${grid}
          <path d="M107 251Q120 140 131 136 137 126 155 126H380C480 126 510 119 560 115Q620 109 702 109" fill="none" stroke="#55dff7" stroke-width="3"/>
          ${node(1, 133, 153)}${node(2, 276, 124)}${node(3, 417, 124)}${node(4, 538, 109)}</svg>
        <div class="flex flex-1 gap-1">${['cut', 'bell', 'bell', 'shelf', 'bell', 'bell', 'bell', 'high'].map(band).join('')}</div>
      </div>
      <div class="flex flex-1 flex-col rounded-md bg-[#8f8f8f] px-[6px] pt-[11px] text-[18px] font-medium">
        <div class="flex justify-between">${btn(`<svg class="mx-auto w-5" viewBox="0 0 22 22">${phones}</svg>`, 'bg-[#bbb] w-[39px]', 'Audition')}${btn('<svg class="mx-auto w-7" viewBox="0 0 28 20"><path d="M3 11v6M7 6v11M11 2v15M15 5v12M19 9v8M25 13v4" stroke="#000" stroke-width="2"/></svg>', 'bg-[#ffb100] w-[39px]', 'Analyzer')}</div>
        <span class="mt-[7px] mb-[2px]">Mode</span><div class="font-normal">${select('Stereo', 'Mode')}</div>
        <span class="mt-[7px] mb-[2px]">Edit</span>${btn('A', 'bg-[#bbb] text-[#505050] font-normal')}
        <span class="mt-[8px] mb-[2px] whitespace-nowrap">Adapt. Q</span>${btn('On', 'bg-[#ffb100] font-normal')}
        <span class="mt-[8px] mb-[2px]">Scale</span><div class="font-normal">${slider('100 %', 'Scale', 75)}</div>
        <span class="mt-[10px] mb-[2px]">Gain</span><div class="font-normal whitespace-nowrap">${slider('0.00 dB', 'Output gain', 50)}</div>
      </div></div>`, { bg: 'bg-[#aaa]' });

    document.getElementById('devices').innerHTML =
      `<div class="flex w-[28px] shrink-0 flex-col items-center justify-center gap-[1px]">${'<i class="size-[6px] rounded-full bg-[#1a1a1a]"></i>'.repeat(10)}</div>` +
      plugin('SINE Player', false, { head: 'bg-[#a5bacb]' }) + meter + eq + meter +
      plugin('Fire', false, { off: true }) + meter +
      utility(knob('Gain', '4.00 dB', 14, true), knob('Width', '38 %', -50, true), knob('Balance', 'C', 0, true)) + meter +
      utility(knob('Gain', '0.00 dB', 0, true), knob('Width', '100 %', 0, true), knob('Balance', 'C', 0, true), true) + meter +
      plugin('ValhallaSu...', true, {}) + meter +
      `<div class="mr-[5px] flex min-w-0 flex-1 items-center justify-end bg-[#8f8f8f]"><p class="text-right leading-7 whitespace-nowrap">Drop A<br>Effects</p></div>`;
  </script>
</body>

</html>
